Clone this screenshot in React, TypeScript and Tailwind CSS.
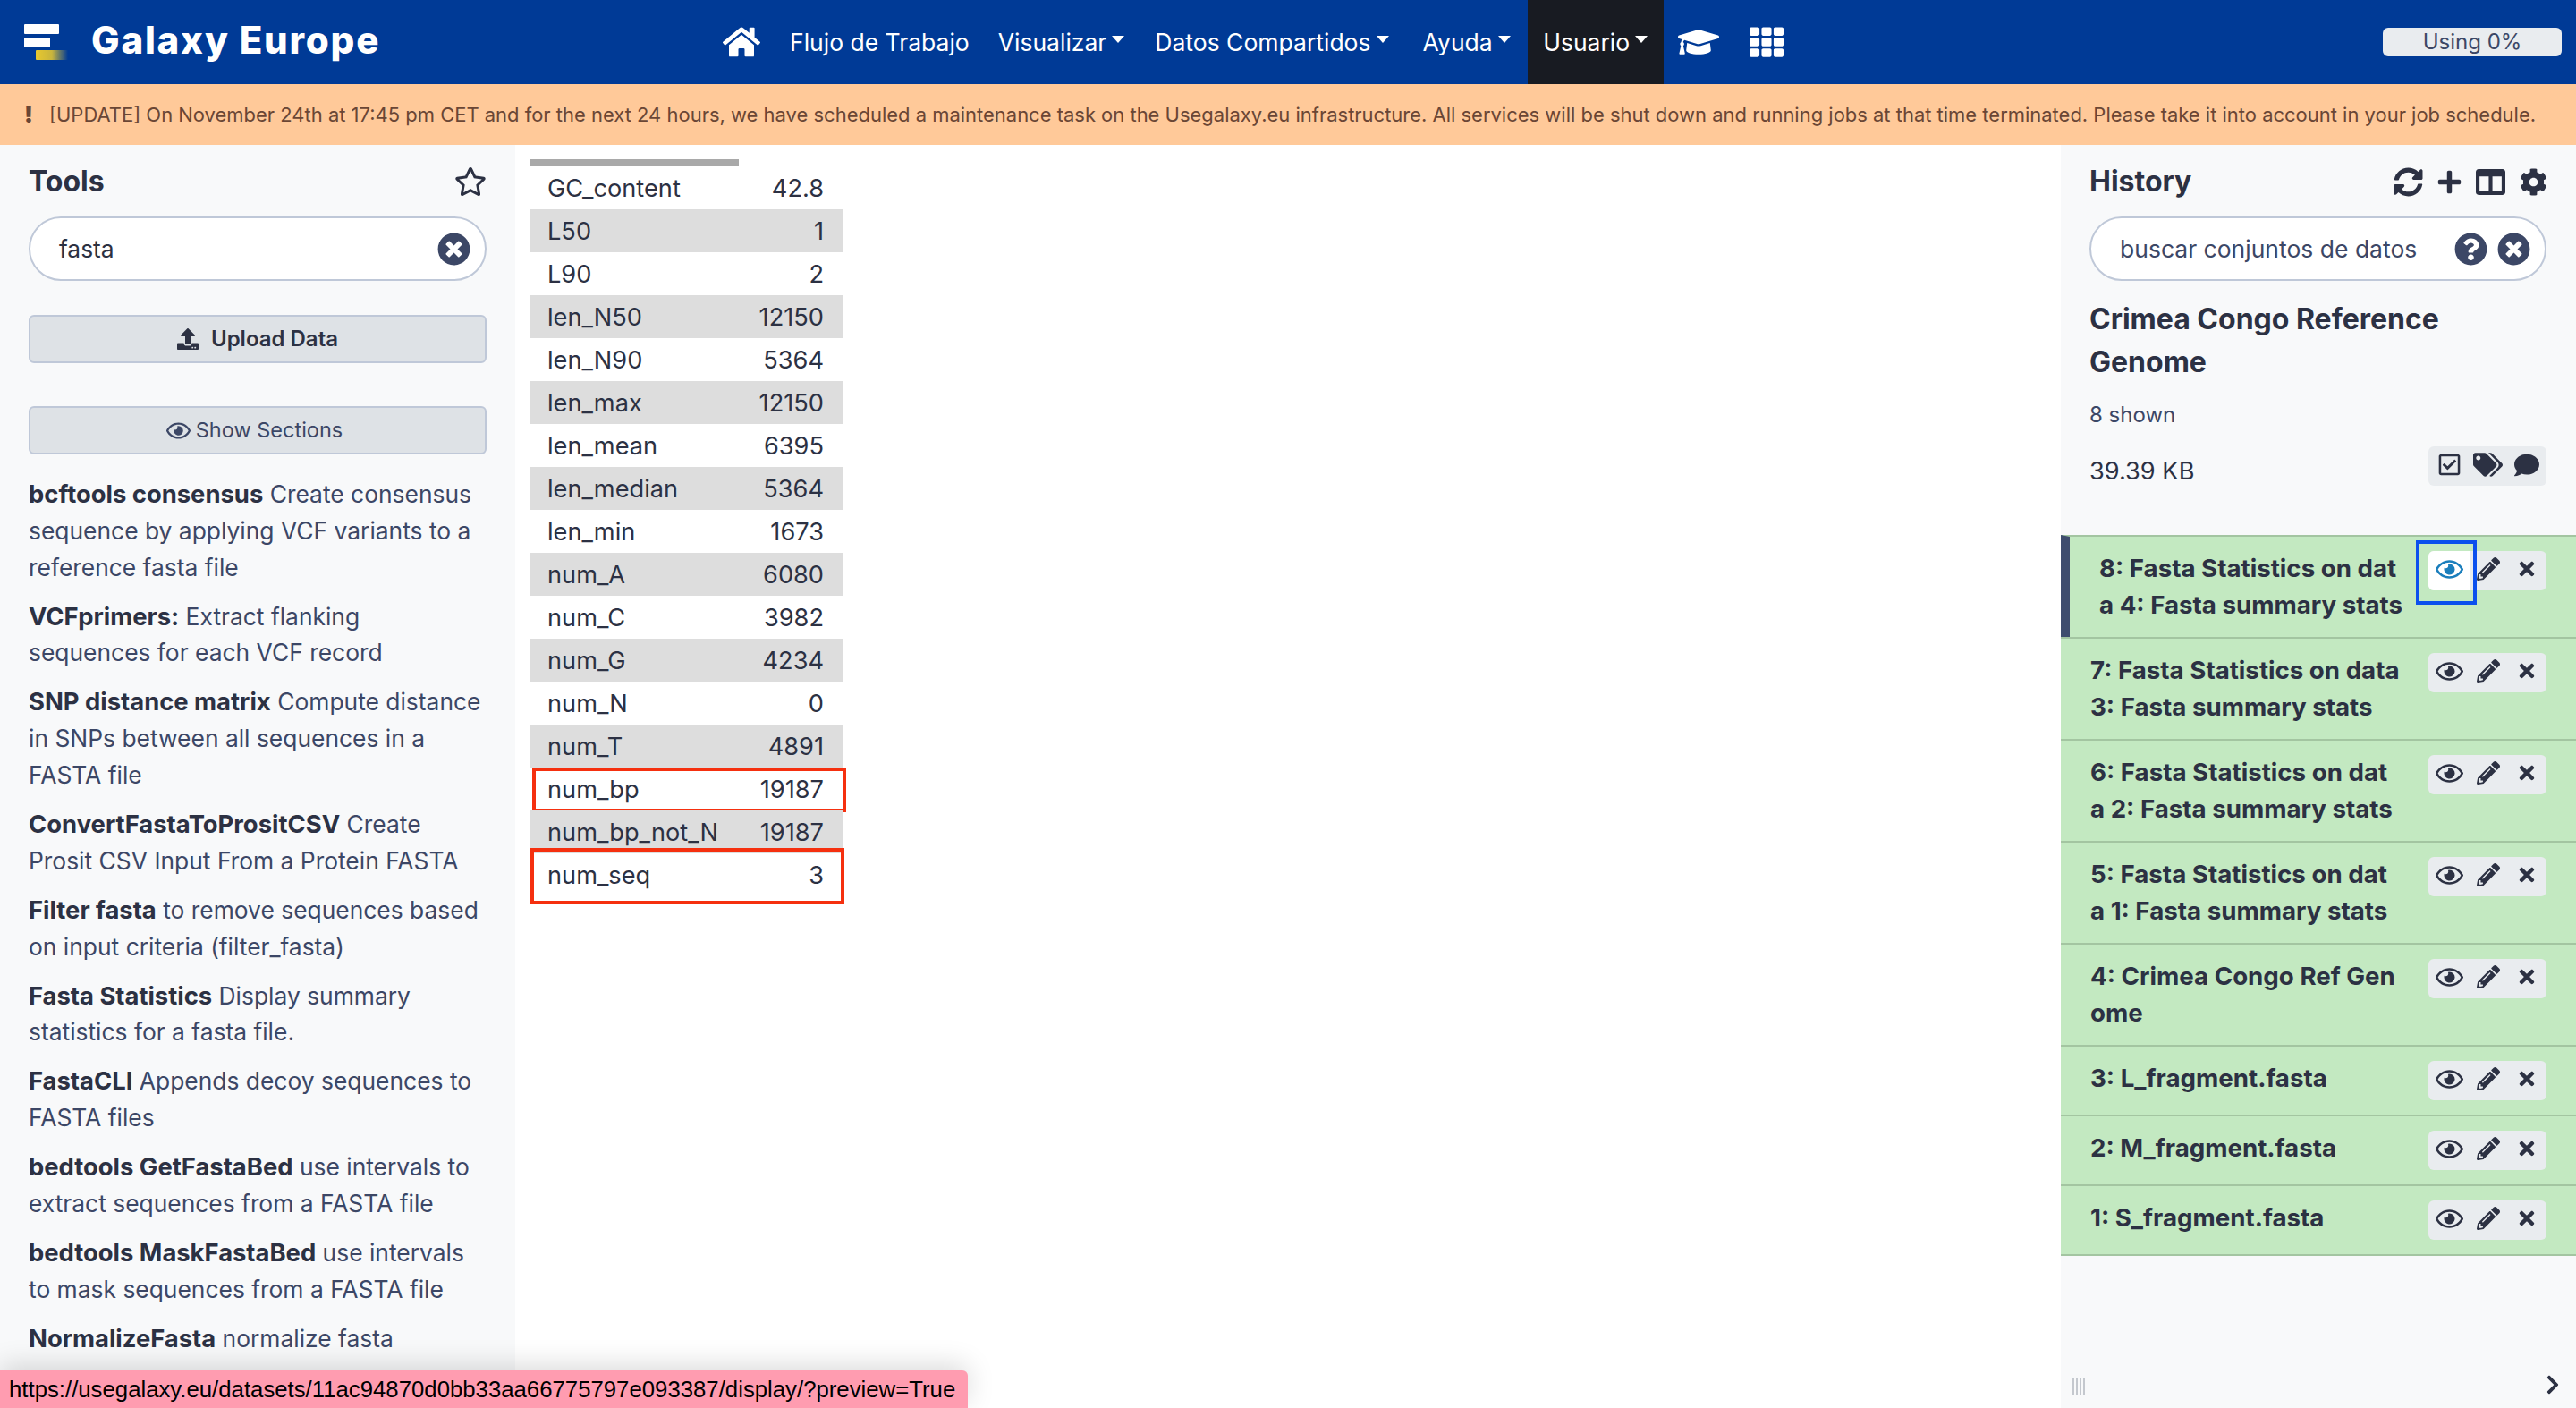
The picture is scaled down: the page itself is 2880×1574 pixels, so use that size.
import {
  FaChevronRight,
  FaCog,
  FaColumns,
  FaComment,
  FaGraduationCap,
  FaHome,
  FaPencilAlt,
  FaPlus,
  FaQuestionCircle,
  FaRegCheckSquare,
  FaRegEye,
  FaRegStar,
  FaSyncAlt,
  FaTags,
  FaTh,
  FaTimes,
  FaTimesCircle,
  FaUpload,
} from "react-icons/fa";

const stats: [string, string][] = [
  ["GC_content", "42.8"],
  ["L50", "1"],
  ["L90", "2"],
  ["len_N50", "12150"],
  ["len_N90", "5364"],
  ["len_max", "12150"],
  ["len_mean", "6395"],
  ["len_median", "5364"],
  ["len_min", "1673"],
  ["num_A", "6080"],
  ["num_C", "3982"],
  ["num_G", "4234"],
  ["num_N", "0"],
  ["num_T", "4891"],
  ["num_bp", "19187"],
  ["num_bp_not_N", "19187"],
  ["num_seq", "3"],
];

const tools: { name: string; first: string; rest: string[] }[] = [
  { name: "bcftools consensus", first: "Create consensus", rest: ["sequence by applying VCF variants to a", "reference fasta file"] },
  { name: "VCFprimers:", first: "Extract flanking", rest: ["sequences for each VCF record"] },
  { name: "SNP distance matrix", first: "Compute distance", rest: ["in SNPs between all sequences in a", "FASTA file"] },
  { name: "ConvertFastaToPrositCSV", first: "Create", rest: ["Prosit CSV Input From a Protein FASTA"] },
  { name: "Filter fasta", first: "to remove sequences based", rest: ["on input criteria (filter_fasta)"] },
  { name: "Fasta Statistics", first: "Display summary", rest: ["statistics for a fasta file."] },
  { name: "FastaCLI", first: "Appends decoy sequences to", rest: ["FASTA files"] },
  { name: "bedtools GetFastaBed", first: "use intervals to", rest: ["extract sequences from a FASTA file"] },
  { name: "bedtools MaskFastaBed", first: "use intervals", rest: ["to mask sequences from a FASTA file"] },
  { name: "NormalizeFasta", first: "normalize fasta", rest: [] },
];

const datasets: { lines: string[] }[] = [
  { lines: ["7: Fasta Statistics on data", "3: Fasta summary stats"] },
  { lines: ["6: Fasta Statistics on dat", "a 2: Fasta summary stats"] },
  { lines: ["5: Fasta Statistics on dat", "a 1: Fasta summary stats"] },
  { lines: ["4: Crimea Congo Ref Gen", "ome"] },
  { lines: ["3: L_fragment.fasta"] },
  { lines: ["2: M_fragment.fasta"] },
  { lines: ["1: S_fragment.fasta"] },
];

function NavLink({ label, caret, className }: { label: string; caret?: boolean; className?: string }) {
  return (
    <div className={`flex items-center whitespace-nowrap ${className ?? ""}`}>
      <span>{label}</span>
      {caret && <span className="ml-[6px] mt-[-6px] h-0 w-0 border-x-[7px] border-t-[8px] border-x-transparent border-t-white" />}
    </div>
  );
}

function Logo() {
  return (
    <svg width="50" height="42" viewBox="0 0 50 42" className="ml-[26px]">
      <defs>
        <linearGradient id="logo-fade" x1="0" x2="1" y1="0" y2="0">
          <stop offset="0" stopColor="#e8c82e" />
          <stop offset="0.5" stopColor="#c9b53c" />
          <stop offset="1" stopColor="#c9b53c" stopOpacity="0" />
        </linearGradient>
      </defs>
      <rect x="1" y="1" width="39" height="11" rx="1" fill="#ffffff" />
      <rect x="1" y="16" width="29" height="11" rx="1" fill="#ffffff" />
      <rect x="14" y="30" width="36" height="11" rx="1" fill="url(#logo-fade)" />
    </svg>
  );
}

function ActionGroup({ active }: { active?: boolean }) {
  return (
    <div className="relative flex h-[44px] w-[132px] shrink-0 items-stretch rounded-[6px] bg-[#e9ecef] text-[#2c3143]">
      <div className={`flex w-[46px] items-center justify-center rounded-l-[6px] ${active ? "bg-white text-[#1a7ebc]" : ""}`}>
        <FaRegEye className="mt-[-3px] text-[31px]" />
      </div>
      <div className="flex w-[42px] items-center justify-center">
        <FaPencilAlt className="mt-[-3px] text-[26px]" />
      </div>
      <div className="flex flex-1 items-center justify-center">
        <FaTimes className="mt-[-3px] text-[24px]" />
      </div>
      {active && <div className="absolute left-[-14px] top-[-12px] h-[72px] w-[68px] border-[4px] border-[#0b50ee]" />}
    </div>
  );
}

export default function App() {
  return (
    <div
      className="relative flex h-[1574px] w-[2880px] flex-col overflow-hidden bg-white text-[27.2px] leading-[40.8px] text-[#2c3143]"
      style={{ fontFamily: "Inter, 'Liberation Sans', sans-serif" }}
    >
      <header className="flex h-[94px] shrink-0 items-center bg-[#003a96] text-[26.5px] text-white">
        <Logo />
        <div className="mb-[4px] ml-[26px] w-[706px] text-[42px] font-extrabold leading-none tracking-[1.8px]">Galaxy Europe</div>
        <FaHome className="text-[42px]" />
        <NavLink label="Flujo de Trabajo" className="ml-[33px]" />
        <NavLink label="Visualizar" caret className="ml-[32px]" />
        <NavLink label="Datos Compartidos" caret className="ml-[34px]" />
        <NavLink label="Ayuda" caret className="ml-[38px]" />
        <div className="ml-[19px] flex h-full w-[152px] items-center justify-center bg-[#181b22]">
          <NavLink label="Usuario" caret />
        </div>
        <FaGraduationCap className="ml-[16px] text-[46px]" />
        <FaTh className="ml-[34px] text-[38px]" />
        <div className="ml-auto mr-[16px] flex h-[32px] w-[200px] items-center justify-center rounded-[6px] bg-[#e9ecef] text-[24px] text-[#3c4766]">
          Using 0%
        </div>
      </header>

      <div className="flex h-[68px] shrink-0 items-center whitespace-nowrap bg-[#ffc999] pl-[27px] text-[21.97px] text-[#6a4635]">
        <span className="w-[28px] shrink-0 text-[26px] font-black">!</span>
        <span>
          [UPDATE] On November 24th at 17:45 pm CET and for the next 24 hours, we have scheduled a maintenance task on the Usegalaxy.eu infrastructure. All services will be shut down and running jobs at that time terminated. Please take it into account in your job schedule.
        </span>
      </div>

      <div className="flex min-h-0 flex-1">
        <aside className="w-[576px] shrink-0 overflow-hidden bg-[#f8f9fa] px-[32px]">
          <div className="mt-[21px] flex h-[40px] items-center justify-between">
            <h2 className="text-[32px] font-bold">Tools</h2>
            <FaRegStar className="text-[36px]" />
          </div>
          <div className="mt-[19px] flex h-[72px] items-center justify-between rounded-full border-2 border-[#bfc8d8] bg-white pl-[32px] pr-[16px] text-[26.4px]">
            <span className="pt-[1px]">fasta</span>
            <FaTimesCircle className="text-[37px] text-[#3c4766]" />
          </div>
          <button className="mt-[38px] flex h-[54px] w-full items-center justify-center rounded-[6px] border-2 border-[#bfc8d8] bg-[#dee2e6] text-[24px] font-semibold">
            <FaUpload className="mr-[14px] text-[24px]" />
            Upload Data
          </button>
          <button className="mt-[48px] flex h-[54px] w-full items-center justify-center rounded-[6px] border-2 border-[#bfc8d8] bg-[#dee2e6] pr-[7px] text-[23.5px] text-[#3c4766]">
            <FaRegEye className="mr-[6px] text-[27px]" />
            Show Sections
          </button>
          <div className="mt-[24px] flex flex-col gap-[14.2px] whitespace-nowrap text-[26.4px]">
            {tools.map((tool) => (
              <div key={tool.name}>
                <div>
                  <b className="text-[27.4px] font-bold">{tool.name}</b> <span className="text-[#3c4766]">{tool.first}</span>
                </div>
                {tool.rest.map((line) => (
                  <div key={line} className="text-[#3c4766]">
                    {line}
                  </div>
                ))}
              </div>
            ))}
          </div>
        </aside>

        <main className="min-w-0 flex-1 pl-[16px] pt-[16px]">
          <div className="h-[8px] w-[234px] bg-[#a9a9a9]" />
          <div className="w-[350px]">
            {stats.map(([key, value], i) => (
              <div
                key={key}
                className={`relative flex h-[48px] items-center justify-between pl-[20px] pr-[21px] pt-[2px] ${i % 2 === 1 ? "bg-[#dddddd]" : ""}`}
              >
                <span>{key}</span>
                <span>{value}</span>
                {key === "num_bp" && (
                  <div className="absolute bottom-[-2px] left-[3px] right-[-4px] top-0 border-[4px] border-[#f5300f]" />
                )}
                {key === "num_seq" && (
                  <div className="absolute bottom-[-9px] left-[1px] right-[-2px] top-[-6px] border-[4px] border-[#f5300f]" />
                )}
              </div>
            ))}
          </div>
        </main>

        <aside className="relative w-[576px] shrink-0 overflow-hidden bg-[#f8f9fa]">
          <div className="pl-[32px] pr-[33px]">
            <div className="mt-[21px] flex h-[40px] items-center justify-between">
              <h2 className="text-[32px] font-bold">History</h2>
              <div className="mr-[-1px] flex items-center">
                <FaSyncAlt className="text-[33px]" />
                <FaPlus className="ml-[15px] text-[29px]" />
                <FaColumns className="ml-[15px] text-[33px]" />
                <FaCog className="ml-[16px] text-[31px]" />
              </div>
            </div>
            <div className="mt-[19px] flex h-[72px] items-center rounded-full border-2 border-[#bfc8d8] bg-white pl-[32px] pr-[16px] text-[26.5px] text-[#3c4766]">
              <span className="pt-[1px]">buscar conjuntos de datos</span>
              <FaQuestionCircle className="ml-auto text-[37px]" />
              <FaTimesCircle className="ml-[11px] text-[37px]" />
            </div>
            <h3 className="mt-[19px] text-[32px] font-bold leading-[47.5px]">
              Crimea Congo Reference
              <br />
              Genome
            </h3>
            <div className="mt-[16px] text-[24px] text-[#3c4766]">8 shown</div>
            <div className="mt-[14px] flex h-[50px] justify-between">
              <span className="mt-[8px]">39.39 KB</span>
              <div className="flex h-[44px] w-[132px] items-center gap-[13px] rounded-[6px] bg-[#e9ecef] pb-[2px] pl-[10px]">
                <FaRegCheckSquare className="text-[27px]" />
                <FaTags className="text-[33px]" />
                <FaComment className="text-[28px]" />
              </div>
            </div>
          </div>

          <div className="mt-[49px] border-b-2 border-[#a3c5a1] text-[27.7px]">
            <div className="flex h-[114px] justify-between border-l-[10px] border-t-2 border-[#a3c5a1] border-l-[#3f4d6e] bg-[#c3e9c1] pl-[33px] pr-[33px] pt-[15px] font-bold">
              <div>
                <div>8: Fasta Statistics on dat</div>
                <div>a 4: Fasta summary stats</div>
              </div>
              <div className="mt-[1px]">
                <ActionGroup active />
              </div>
            </div>
            {datasets.map((d) => (
              <div
                key={d.lines[0]}
                className={`flex justify-between border-t-2 border-[#a3c5a1] bg-[#c3e9c1] pl-[33px] pr-[33px] pt-[15px] font-bold ${d.lines.length > 1 ? "h-[114px]" : "h-[78px]"}`}
              >
                <div>
                  {d.lines.map((line) => (
                    <div key={line}>{line}</div>
                  ))}
                </div>
                <div className="mt-[1px]">
                  <ActionGroup />
                </div>
              </div>
            ))}
          </div>

          <div className="absolute bottom-[14px] left-[13px] h-[20px] w-[16px] bg-[repeating-linear-gradient(90deg,#c4c8ce_0,#c4c8ce_2px,transparent_2px,transparent_4px)]" />
          <FaChevronRight className="absolute bottom-[14px] right-[14px] text-[24px]" />
        </aside>
      </div>

      <div
        className="absolute bottom-0 left-0 flex h-[42px] w-[1082px] items-center whitespace-nowrap rounded-tr-[6px] bg-[#ff9cb0] pl-[10px] text-[25.75px] text-black shadow-[0_-6px_30px_rgba(0,0,0,0.15)]"
        style={{ fontFamily: "'Liberation Sans', Arial, sans-serif" }}
      >
        https://usegalaxy.eu/datasets/11ac94870d0bb33aa66775797e093387/display/?preview=True
      </div>
    </div>
  );
}
